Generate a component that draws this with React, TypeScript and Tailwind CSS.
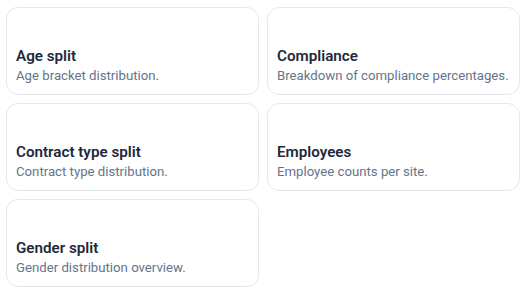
import React from 'react';

const reports = [
  { title: 'Age split', description: 'Age bracket distribution.' },
  { title: 'Compliance', description: 'Breakdown of compliance percentages.' },
  { title: 'Contract type split', description: 'Contract type distribution.' },
  { title: 'Employees', description: 'Employee counts per site.' },
  { title: 'Gender split', description: 'Gender distribution overview.' },
];

export default function App() {
  return (
    <div className="min-h-screen bg-white pl-[6px] pr-[9px] pt-[7px] font-['Roboto',sans-serif]">
      <div className="grid grid-cols-2 gap-2">
        {reports.map((r) => (
          <div
            key={r.title}
            className="flex h-[88px] flex-col justify-end rounded-xl border border-[#e5e7eb] bg-white pl-[9px] pr-[10px] pb-[9px]"
          >
            <h3 className="mb-[2px] text-[15.2px] font-semibold leading-[17px] text-[#1e293b]">{r.title}</h3>
            <p className="text-[13.2px] leading-[18px] text-[#64748b]">{r.description}</p>
          </div>
        ))}
      </div>
    </div>
  );
}
